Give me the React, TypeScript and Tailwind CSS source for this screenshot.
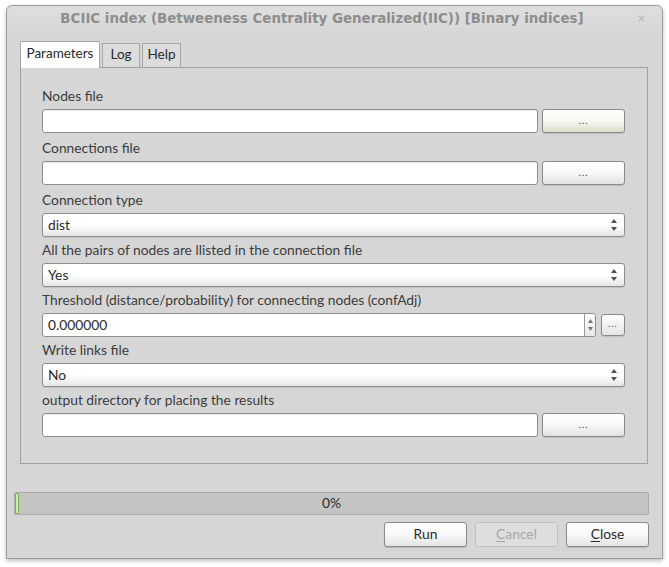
import React from 'react'

const font = { fontFamily: 'Lato, "Open Sans", sans-serif' }

function Label({ children }: { children: React.ReactNode }) {
  return <div className="h-[16px] text-[13.8px] leading-[16px] text-[#3c3c3c]">{children}</div>
}

function TextInput() {
  return <div className="flex-1 h-[24px] bg-white border border-[#8e8e8e] rounded-[3px] shadow-[inset_0_1px_1px_rgba(0,0,0,0.08)]" />
}

function Browse({ green = false }: { green?: boolean }) {
  return (
    <div
      className={`w-[83px] h-[24px] border border-[#8a8a8a] rounded-[3px] flex items-center justify-center text-[10px] text-[#3a3a5a] shadow-[0_1px_1px_rgba(0,0,0,0.12)] ${
        green ? 'bg-gradient-to-b from-white via-[#f6f7f2] to-[#d8e0cc]' : 'bg-gradient-to-b from-white via-[#f7f7f7] to-[#e2e2e2]'
      }`}
    >
      <span className="tracking-[1px] -mt-[2px]">...</span>
    </div>
  )
}

function Arrows() {
  return (
    <div className="flex flex-col items-center gap-[4px] mr-[7px]">
      <svg width="6" height="4" viewBox="0 0 6 4"><path d="M3 0 L6 4 L0 4 Z" fill="#505050" /></svg>
      <svg width="6" height="4" viewBox="0 0 6 4"><path d="M0 0 L6 0 L3 4 Z" fill="#505050" /></svg>
    </div>
  )
}

function Combo({ value }: { value: string }) {
  return (
    <div className="h-[24px] border border-[#8e8e8e] rounded-[3px] bg-gradient-to-b from-white via-white to-[#e6e6e6] flex items-center justify-between pl-[5px] text-[13.8px] text-[#2a2a2a] shadow-[0_1px_1px_rgba(0,0,0,0.1)]">
      <span>{value}</span>
      <Arrows />
    </div>
  )
}

function Group({ label, children }: { label: string; children: React.ReactNode }) {
  return (
    <div className="flex flex-col gap-[5px]">
      <Label>{label}</Label>
      {children}
    </div>
  )
}

function BigButton({ children, disabled = false }: { children: React.ReactNode; disabled?: boolean }) {
  return (
    <div
      className={`w-[83px] h-[25px] rounded-[3px] flex items-center justify-center text-[13.8px] ${
        disabled
          ? 'border border-[#c2c2c2] bg-[#dedede] text-[#a6a6a6]'
          : 'border border-[#8a8a8a] bg-gradient-to-b from-white via-[#f8f8f8] to-[#e4e4e4] text-[#2a2a2a] shadow-[0_1px_1px_rgba(0,0,0,0.15)]'
      }`}
    >
      {children}
    </div>
  )
}

export default function App() {
  return (
    <div className="w-[669px] h-[567px] bg-white pt-[5px] pl-[6px]" style={font}>
      <div className="w-[657px] h-[554px] bg-[#d6d6d6] border border-[#9c9c9c] rounded-t-[6px] shadow-[0_2px_4px_rgba(0,0,0,0.25)] flex flex-col">
        {/* title bar */}
        <div className="h-[25px] rounded-t-[6px] bg-gradient-to-b from-[#dedede] to-[#d8d8d8] flex items-center relative">
          <div
            className="flex-1 text-center text-[13.4px] font-bold text-[#8d8d8d] pt-[1px] pr-[25px]"
            style={{ fontFamily: '"DejaVu Sans", sans-serif' }}
          >
            BCIIC index (Betweeness Centrality Generalized(IIC)) [Binary indices]
          </div>
          <span className="absolute right-[17px] top-[3px] text-[13px] text-[#b4b4b4]">×</span>
        </div>

        {/* tabs */}
        <div className="mt-[10px] pl-[13px] pr-[14px]">
          <div className="flex items-end h-[26px] relative z-10">
            <div className="w-[80px] h-[27px] bg-white border border-[#a6a6a6] border-b-0 rounded-t-[2px] text-[13.5px] text-[#2a2a2a] flex items-center justify-center pb-[4px] -mb-[1px]">
              Parameters
            </div>
            <div className="ml-[2px] w-[38px] h-[24px] bg-[#dcdcdc] border border-[#a6a6a6] border-b-0 text-[13.5px] text-[#2a2a2a] flex items-center justify-center pb-[2px]">
              Log
            </div>
            <div className="ml-[2px] w-[39px] h-[24px] bg-[#dcdcdc] border border-[#a6a6a6] border-b-0 text-[13.5px] text-[#2a2a2a] flex items-center justify-center pb-[2px]">
              Help
            </div>
          </div>
          <div className="h-[397px] border border-[#a0a0a0] bg-[#d6d6d6] pt-[20px] pl-[21px] pr-[22px] flex flex-col gap-[5px]">
            <Group label="Nodes file">
              <div className="flex gap-[4px] h-[26px]">
                <TextInput />
                <Browse green />
              </div>
            </Group>
            <Group label="Connections file">
              <div className="flex gap-[4px] h-[26px]">
                <TextInput />
                <Browse />
              </div>
            </Group>
            <Group label="Connection type">
              <Combo value="dist" />
            </Group>
            <Group label="All the pairs of nodes are llisted in the connection file">
              <Combo value="Yes" />
            </Group>
            <Group label="Threshold (distance/probability) for connecting nodes (confAdj)">
              <div className="flex gap-[5px] items-center h-[24px]">
                <div className="flex-1 h-[24px] bg-white border border-[#8e8e8e] rounded-[3px] flex items-center">
                  <span className="flex-1 pl-[5px] text-[13.8px] text-[#2a2a2a]">0.000000</span>
                  <div className="w-[11px] h-full border-l border-[#9a9a9a] bg-gradient-to-b from-white to-[#e8e8e8] rounded-r-[3px] flex flex-col items-center justify-center gap-[4px]">
                    <svg width="5" height="4" viewBox="0 0 5 4"><path d="M2.5 0 L5 4 L0 4 Z" fill="#777" /></svg>
                    <svg width="5" height="4" viewBox="0 0 5 4"><path d="M0 0 L5 0 L2.5 4 Z" fill="#777" /></svg>
                  </div>
                </div>
                <div className="w-[24px] h-[22px] border border-[#8a8a8a] rounded-[3px] bg-gradient-to-b from-white to-[#e4e4e4] flex items-center justify-center text-[9px] text-[#3a3a7a] shadow-[0_1px_1px_rgba(0,0,0,0.12)]">
                  <span className="-mt-[2px] tracking-[1px]">...</span>
                </div>
              </div>
            </Group>
            <Group label="Write links file">
              <Combo value="No" />
            </Group>
            <Group label="output directory for placing the results">
              <div className="flex gap-[4px] h-[26px]">
                <TextInput />
                <Browse />
              </div>
            </Group>
          </div>
        </div>

        {/* progress */}
        <div className="mt-[28px] pl-[7px] pr-[13px]">
          <div className="h-[23px] border border-[#aaaaaa] rounded-[2px] bg-[#c4c4c4] relative flex items-center justify-center text-[13.8px] text-[#2a2a2a]">
            <div className="absolute left-0 top-0 bottom-0 w-[4px] bg-[#cfe8b0] border border-[#7fb350] rounded-[1px]" />
            <span>0%</span>
          </div>
        </div>

        {/* buttons */}
        <div className="mt-[7px] pr-[13px] flex justify-end gap-[8px]">
          <BigButton>Run</BigButton>
          <BigButton disabled>
            <span><span className="underline underline-offset-2">C</span>ancel</span>
          </BigButton>
          <BigButton>
            <span><span className="underline underline-offset-2">C</span>lose</span>
          </BigButton>
        </div>
      </div>
    </div>
  )
}
